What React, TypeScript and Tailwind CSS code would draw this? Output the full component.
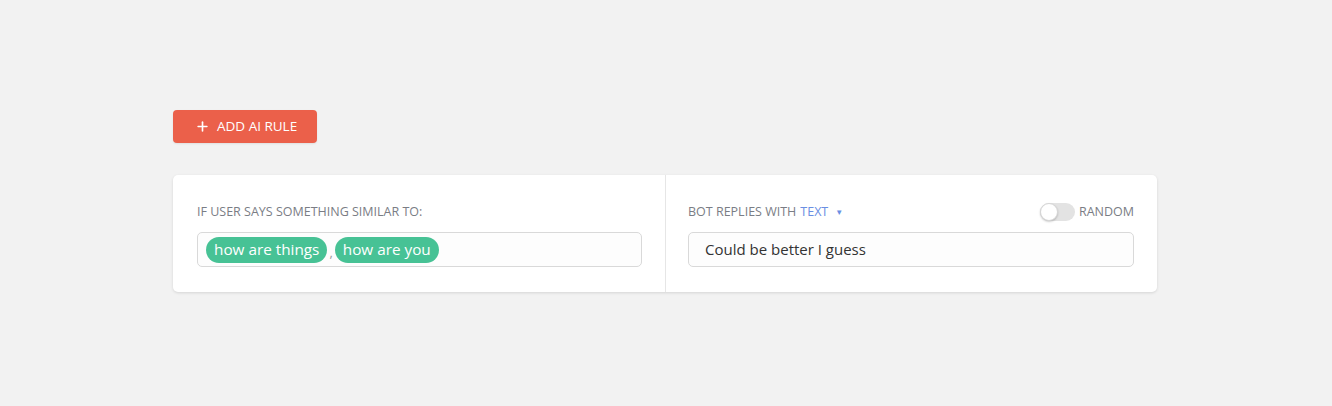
import { Plus } from "lucide-react";

function Chip({ label }: { label: string }) {
  return (
    <span className="inline-flex h-[26px] items-center rounded-full bg-[#47c295] px-[8px] text-[15.3px] leading-none text-white">
      {label}
    </span>
  );
}

function Toggle() {
  return (
    <span className="relative inline-block h-[18px] w-[35px] rounded-full bg-[#e3e3e3]">
      <span className="absolute left-0 top-0 h-[18px] w-[18px] rounded-full border border-[#d6d6d6] bg-white shadow-[0_1px_2px_rgba(0,0,0,0.2)]" />
    </span>
  );
}

export default function App() {
  return (
    <div
      className="h-[406px] w-full bg-[#f2f2f2] pl-[173px] pt-[110px]"
      style={{ fontFamily: '"Open Sans", sans-serif' }}
    >
      <button className="flex h-[33px] w-[144px] items-center gap-[7px] rounded-[4px] bg-[#eb604a] pl-[22px] text-[13.5px] text-white shadow-[0_1px_2px_rgba(0,0,0,0.08)]">
        <Plus size={15} strokeWidth={2.6} />
        <span>ADD AI RULE</span>
      </button>

      <div className="mt-[32px] flex h-[117px] w-[984px] rounded-[5px] bg-white shadow-[0_1px_3px_rgba(0,0,0,0.12)]">
        <div className="w-[492px] pl-[24px] pr-[23px] pt-[28px]">
          <div className="flex h-[18px] items-center text-[12.5px] text-[#7a7d85]">
            IF USER SAYS SOMETHING SIMILAR TO:
          </div>
          <div className="mt-[11px] flex h-[35px] items-center gap-[2px] rounded-[5px] border border-[#d9d9d9] bg-[#fdfdfd] pl-[8px]">
            <Chip label="how are things" />
            <span className="mt-[6px] text-[13px] text-[#999]">,</span>
            <Chip label="how are you" />
          </div>
        </div>

        <div className="w-[492px] border-l border-[#e6e6e6] pl-[22px] pr-[23px] pt-[28px]">
          <div className="flex h-[18px] items-center justify-between text-[12.5px] text-[#7a7d85]">
            <span className="flex items-center">
              BOT REPLIES WITH
              <span className="ml-[4px] text-[#6a8fe3]">TEXT</span>
              <span className="ml-[7px] text-[8px] text-[#6a8fe3]">▼</span>
            </span>
            <span className="flex items-center gap-[4px]">
              <Toggle />
              <span>RANDOM</span>
            </span>
          </div>
          <div className="mt-[11px] flex h-[35px] items-center rounded-[5px] border border-[#d9d9d9] bg-[#fdfdfd] pl-[16px] text-[15px] text-[#333]">
            Could be better I guess
          </div>
        </div>
      </div>
    </div>
  );
}
